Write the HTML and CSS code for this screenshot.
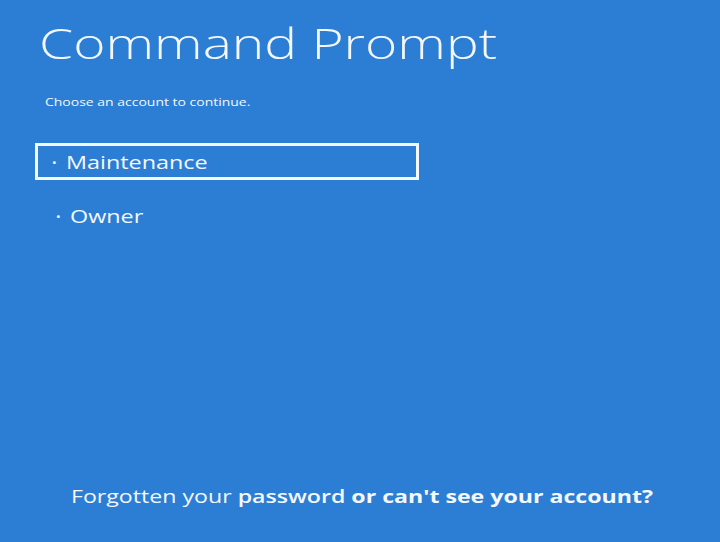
FILE: index.html
```html
<!DOCTYPE html>
<html>
<head>
<meta charset="utf-8">
<link rel="stylesheet" href="styles.css">
</head>
<body>
<div class="screen">
  <h1 class="title"><span class="wide">Command Prompt</span></h1>
  <p class="subtitle"><span class="wide sub">Choose an account to continue.</span></p>
  <ul class="accounts">
    <li class="account selected"><span class="dot">·</span><span class="wide name">Maintenance</span></li>
    <li class="account"><span class="dot">·</span><span class="wide name">Owner</span></li>
  </ul>
  <div class="spacer"></div>
  <p class="footer"><span class="wide foot"><span class="light">Forgotten your</span> <span class="semi">password</span> <span class="bold">or can't see your account?</span></span></p>
</div>
</body>
</html>
```
FILE: styles.css
```css
html, body {
  margin: 0;
  padding: 0;
  width: 720px;
  height: 542px;
  overflow: hidden;
  background: #2c7ed5;
}
.screen {
  box-sizing: border-box;
  width: 720px;
  height: 542px;
  display: flex;
  flex-direction: column;
  color: #f4f8fd;
  font-family: "Open Sans", "Noto Sans", sans-serif;
}
.wide {
  display: inline-block;
  transform-origin: left center;
  transform: scaleX(1.28);
  white-space: nowrap;
}
.title {
  margin: 14px 0 0 39px;
  font-size: 43px;
  font-weight: 300;
  line-height: 58px;
}
.subtitle {
  margin: 23px 0 0 45px;
  font-size: 11px;
  line-height: 14px;
}
.sub {
  transform: scaleX(1.27);
}
.accounts {
  list-style: none;
  margin: 34px 0 0 0;
  padding: 0;
}
.account {
  box-sizing: border-box;
  margin-left: 35px;
  width: 384px;
  height: 37px;
  display: flex;
  align-items: center;
  padding-left: 14px;
  font-size: 19px;
  border: 3px solid transparent;
}
.account + .account {
  margin-top: 17px;
  padding-left: 18px;
}
.name {
  transform: scaleX(1.23);
}
.selected {
  border-color: #f4f8fd;
}
.dot {
  margin-right: 9px;
  font-size: 16px;
  font-weight: 700;
}
.spacer {
  flex: 1;
}
.footer {
  margin: 0 0 34px 71px;
  font-size: 18px;
  line-height: 24px;
}
.foot {
  transform: scaleX(1.285);
}
.light {
  font-weight: 400;
}
.semi {
  font-weight: 600;
}
.bold {
  font-weight: 700;
}
```
